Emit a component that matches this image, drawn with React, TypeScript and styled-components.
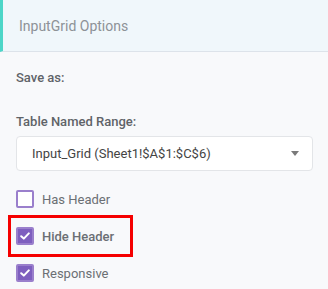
import React from 'react'
import styled, { createGlobalStyle } from 'styled-components'

const GlobalStyle = createGlobalStyle`
  html, body {
    margin: 0;
    padding: 0;
    background: #f8f9fb;
    font-family: Roboto, "Liberation Sans", Arial, sans-serif;
  }
`

const Panel = styled.div`
  width: 328px;
  height: 289px;
  background: #f8f9fb;
  overflow: hidden;
`

const Header = styled.div`
  height: 52px;
  box-sizing: border-box;
  display: flex;
  align-items: center;
  padding-left: 16px;
  background: #f0f7fb;
  border-left: 3px solid #4dd6c8;
  border-bottom: 1px solid #dde3ea;
  color: #8d9297;
  font-size: 14px;
`

const Body = styled.div`
  padding: 18px 15px 0 16px;
  display: flex;
  flex-direction: column;
`

const Label = styled.div<{ $gap: number }>`
  font-size: 13px;
  font-weight: 500;
  color: #5f6368;
  line-height: 16px;
  margin-bottom: ${(p) => p.$gap}px;
`

const Select = styled.div`
  height: 35px;
  box-sizing: border-box;
  display: flex;
  align-items: center;
  justify-content: space-between;
  padding: 0 13px 0 15px;
  background: #fff;
  border: 1px solid #e3e5e8;
  border-radius: 4px;
  font-size: 13px;
  color: #444;
  margin-bottom: 10px;
`

const Caret = styled.span`
  width: 0;
  height: 0;
  border-left: 4px solid transparent;
  border-right: 4px solid transparent;
  border-top: 5px solid #7a7a7a;
`

const Options = styled.div`
  display: flex;
  flex-direction: column;
  gap: 1px;
`

const Row = styled.label<{ $highlight?: boolean }>`
  display: flex;
  align-items: center;
  gap: 8px;
  height: ${(p) => (p.$highlight ? 42 : 36)}px;
  margin: ${(p) => (p.$highlight ? '-3px -8px' : '0 -8px')};
  box-sizing: border-box;
  width: 125px;
  padding-left: 5px;
  border: 3px solid ${(p) => (p.$highlight ? '#f50000' : 'transparent')};
  font-size: 13px;
  color: #6b6f74;
  font-weight: ${(p) => (p.$highlight ? 500 : 400)};
`

const Box = styled.span<{ $checked?: boolean }>`
  width: 18px;
  height: 18px;
  box-sizing: border-box;
  border-radius: 2px;
  border: 2px solid #9a7fcc;
  background: ${(p) => (p.$checked ? '#7e5fbf' : '#fff')};
  display: flex;
  align-items: center;
  justify-content: center;
`

const Check = () => (
  <svg width="10" height="8" viewBox="0 0 10 8">
    <path d="M1.2 4.2 L3.8 6.6 L8.8 1.4" fill="none" stroke="#fff" strokeWidth="2" strokeLinecap="round" strokeLinejoin="round" />
  </svg>
)

const items = [
  { label: 'Has Header', checked: false, highlight: false },
  { label: 'Hide Header', checked: true, highlight: true },
  { label: 'Responsive', checked: true, highlight: false },
]

export default function App() {
  return (
    <Panel>
      <GlobalStyle />
      <Header>InputGrid Options</Header>
      <Body>
        <Label $gap={28}>Save as:</Label>
        <Label $gap={6}>Table Named Range:</Label>
        <Select>
          <span>Input_Grid (Sheet1!$A$1:$C$6)</span>
          <Caret />
        </Select>
        <Options>
          {items.map((it) => (
            <Row key={it.label} $highlight={it.highlight}>
              <Box $checked={it.checked}>{it.checked && <Check />}</Box>
              {it.label}
            </Row>
          ))}
        </Options>
      </Body>
    </Panel>
  )
}
